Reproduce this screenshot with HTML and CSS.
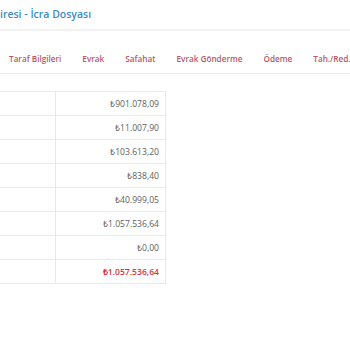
FILE: index.html
```html
<!DOCTYPE html>
<html lang="tr">
<head>
<meta charset="utf-8">
<link rel="stylesheet" href="styles.css">
</head>
<body>
<div class="page">
  <div class="header"><span class="title">iresi - İcra Dosyası</span></div>
  <nav class="tabs">
    <span class="tab">Taraf Bilgileri</span>
    <span class="tab">Evrak</span>
    <span class="tab">Safahat</span>
    <span class="tab">Evrak Gönderme</span>
    <span class="tab">Ödeme</span>
    <span class="tab">Tah./Red.</span>
  </nav>
  <table class="summary">
    <tr><td class="lbl"></td><td class="val">₺901.078,09</td></tr>
    <tr><td class="lbl"></td><td class="val">₺11.007,90</td></tr>
    <tr><td class="lbl"></td><td class="val">₺103.613,20</td></tr>
    <tr><td class="lbl"></td><td class="val">₺838,40</td></tr>
    <tr><td class="lbl"></td><td class="val">₺40.999,05</td></tr>
    <tr><td class="lbl"></td><td class="val">₺1.057.536,64</td></tr>
    <tr><td class="lbl"></td><td class="val">₺0,00</td></tr>
    <tr><td class="lbl"></td><td class="val total">₺1.057.536,64</td></tr>
  </table>
</div>
</body>
</html>
```
FILE: styles.css
```css
html, body {
  margin: 0;
  padding: 0;
  background: #fff;
}
body {
  width: 350px;
  height: 350px;
  overflow: hidden;
  font-family: "Open Sans", "Liberation Sans", sans-serif;
}
.header {
  height: 31px;
  border-bottom: 2px solid #f2f2f2;
  padding-top: 7px;
  box-sizing: border-box;
}
.title {
  display: block;
  font-size: 10.5px;
  line-height: 14px;
  font-weight: 600;
  color: #3c8dc4;
  white-space: nowrap;
}
.tabs {
  display: flex;
  gap: 21px;
  padding: 21px 0 7px 9px;
  border-bottom: 1px solid #ececec;
  white-space: nowrap;
}
.tab {
  font-size: 8.2px;
  line-height: 14px;
  font-weight: 600;
  color: #b5596a;
}
.summary {
  margin-top: 17px;
  border-collapse: collapse;
  width: 166px;
}
.summary td {
  height: 24px;
  padding: 0 6px;
  border: 1px solid #e9e9e9;
  box-sizing: border-box;
  font-size: 8.6px;
  color: #606060;
}
.summary td.lbl {
  width: 55px;
  border-left: none;
}
.summary td.val {
  text-align: right;
}
.summary td.total {
  color: #d6363f;
  font-weight: 600;
}
```
